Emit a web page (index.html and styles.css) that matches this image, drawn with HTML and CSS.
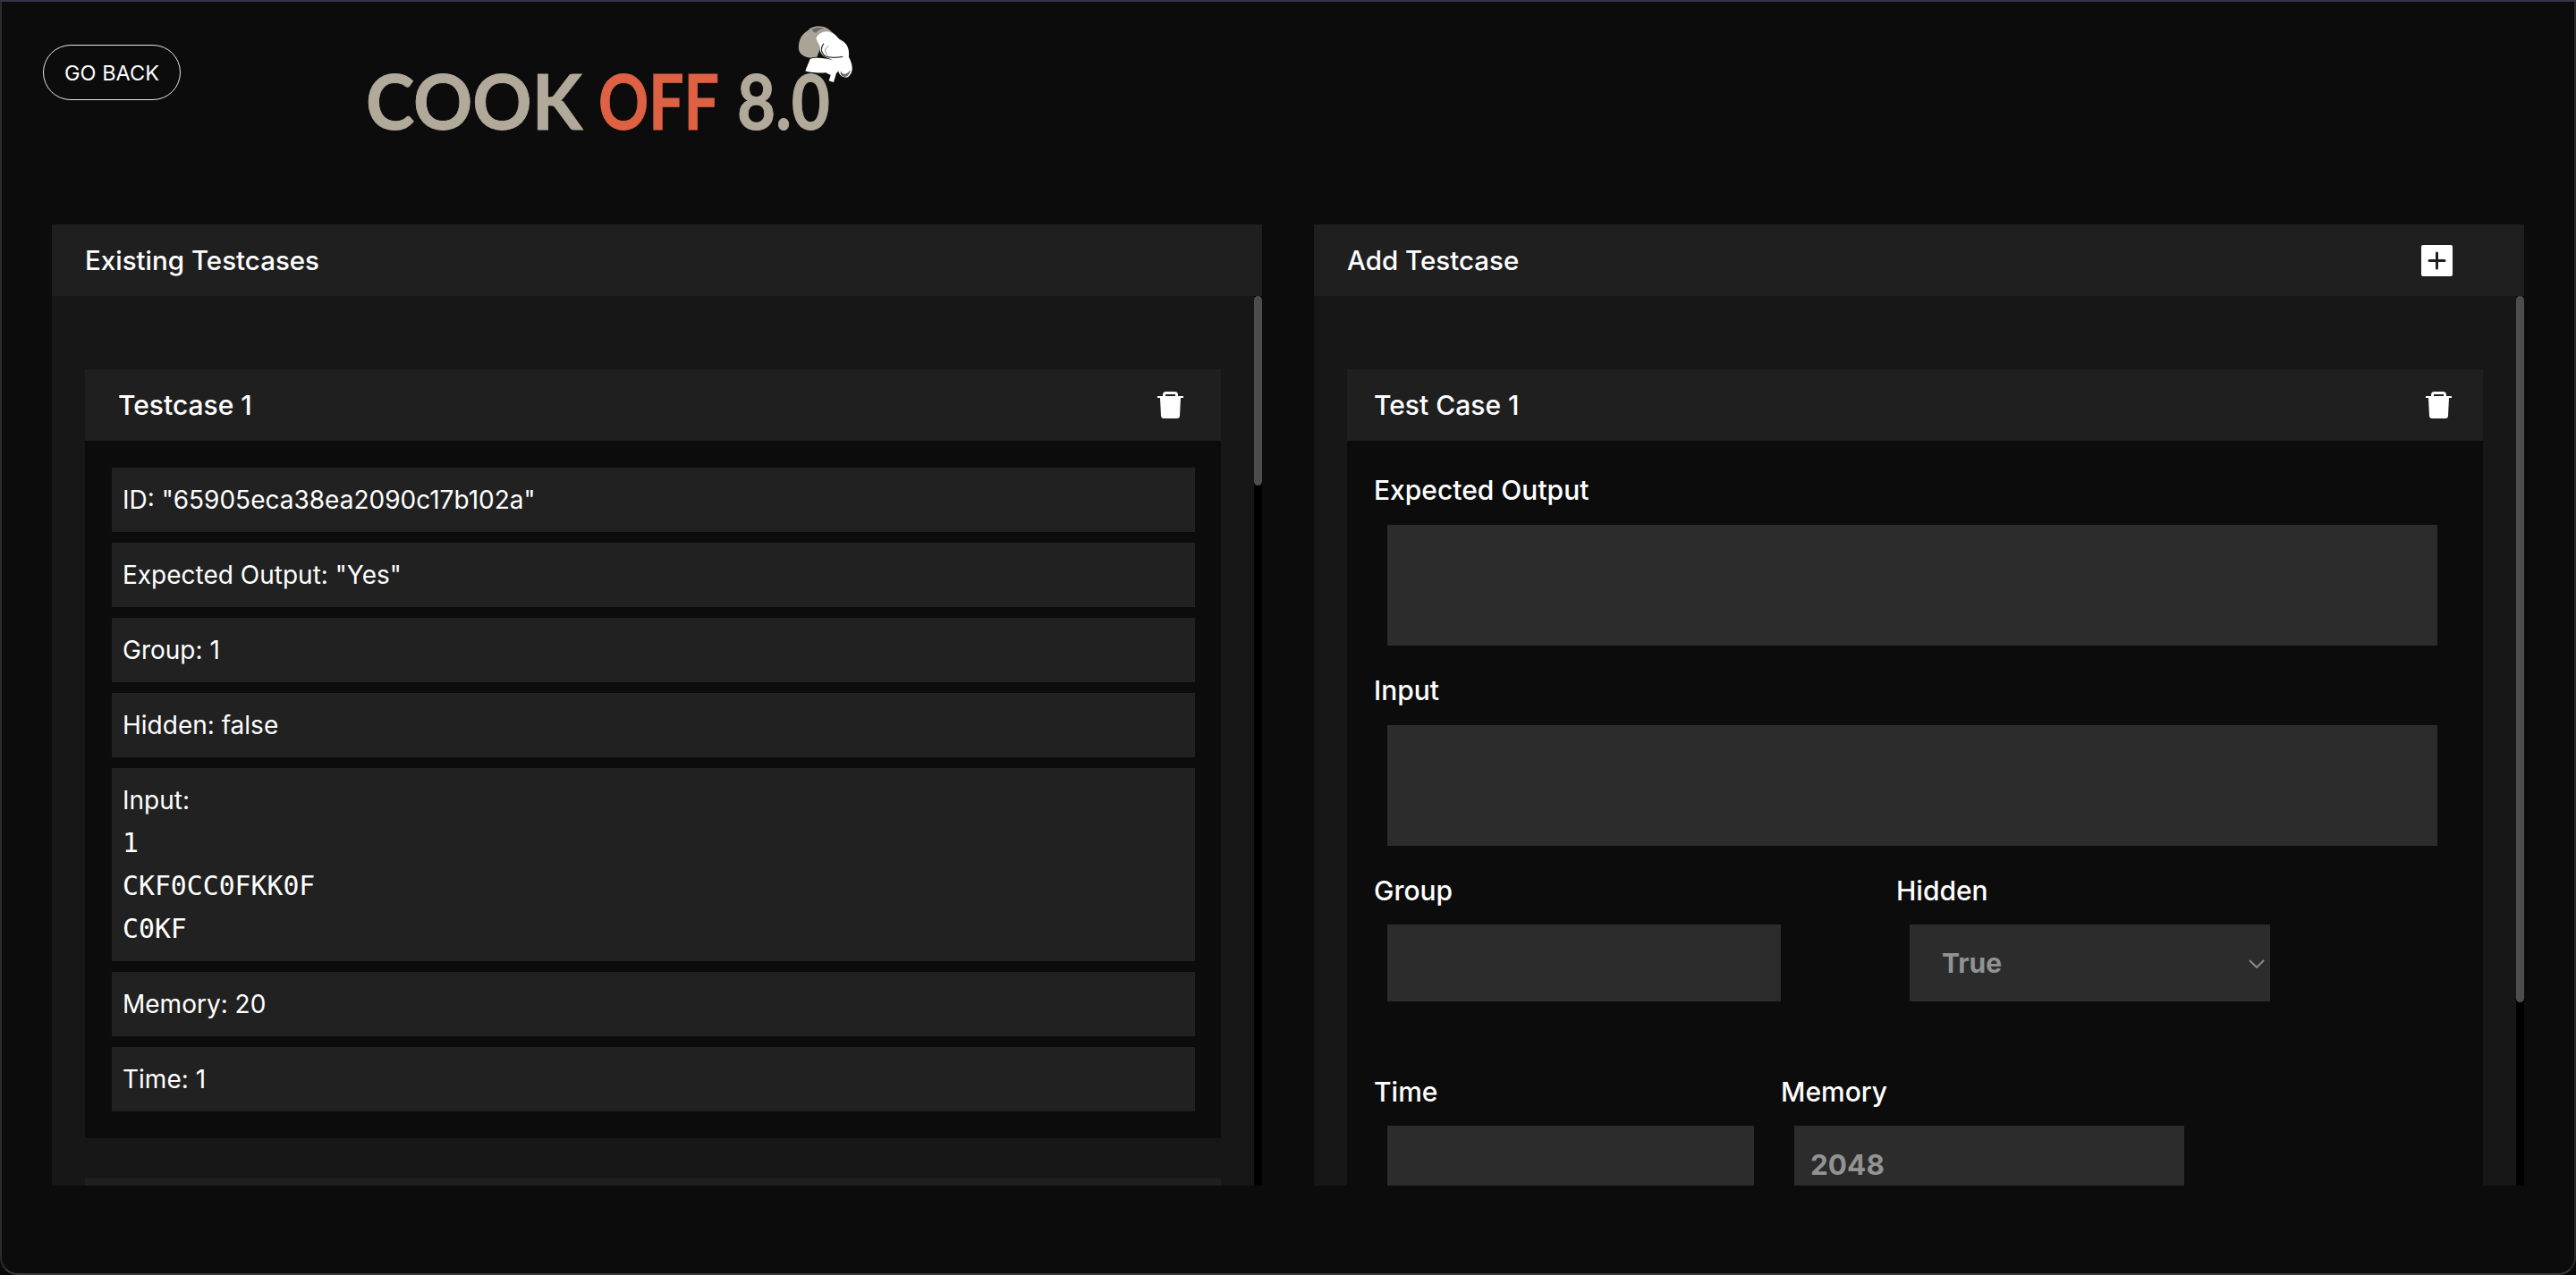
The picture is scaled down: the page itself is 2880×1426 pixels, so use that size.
FILE: index.html
```html
<!DOCTYPE html>
<html lang="en">
<head>
<meta charset="utf-8">
<title>Cook Off 8.0</title>
<link rel="stylesheet" href="styles.css">
</head>
<body>
<div class="window">
  <header class="topbar">
    <button class="back-btn">GO BACK</button>
    <svg class="logo" viewBox="0 0 560 90" width="560" height="90" role="img" aria-label="Cook Off 8.0">
      <text class="logo-text" x="0" y="93" textLength="242" lengthAdjust="spacingAndGlyphs">COOK</text>
      <text class="logo-text logo-off" x="260" y="93" textLength="135" lengthAdjust="spacingAndGlyphs">OFF</text>
      <text class="logo-text" x="415" y="93" textLength="104" lengthAdjust="spacingAndGlyphs">8.0</text>
      <g transform="translate(476 -30) scale(.33333)">
        <path d="M55 36C70 18 105 18 125 32L150 55 110 60 95 100 85 125 62 128C45 125 28 120 24 100 22 75 30 50 55 36Z" fill="#a9a398"/>
        <path d="M68 34C78 26 95 24 110 30 98 30 88 36 82 44 76 44 70 40 68 34Z" fill="#6c6c6c"/>
        <path d="M82 62C92 44 112 34 135 44 150 50 152 60 165 68 185 78 195 95 192 125 205 150 210 175 190 192 175 197 160 190 157 172 150 150 140 132 120 128 100 122 92 105 96 92 92 82 86 74 82 62Z" fill="#fff"/>
        <path d="M108 80C98 92 96 108 112 122 128 130 150 128 172 124" fill="none" stroke="#3a3a38" stroke-width="4"/>
        <path d="M124 88C112 96 108 108 122 118" fill="none" stroke="#8d887e" stroke-width="3"/>
        <path d="M62 132C85 125 115 130 135 135 150 140 158 155 158 172L150 180 141 210 125 205 131 186 115 178C90 180 60 178 46 172 50 160 58 145 62 132Z" fill="#fff"/>
        <path d="M165 172C170 186 186 186 197 168 196 182 188 192 178 192 168 192 162 184 165 172Z" fill="#6c6c6c"/>
      </g>
    </svg>
  </header>
  <main class="panels">
    <section class="panel">
      <div class="panel-head"><h2>Existing Testcases</h2></div>
      <div class="panel-body">
        <article class="card">
          <div class="card-head card-head-wide">
            <h3>Testcase 1</h3>
            <svg class="trash" viewBox="0 0 29 30" width="29" height="30"><path d="M6 6V3.500C6 1 7.500 0 9.500 0h10C21.500 0 23 1 23 3.500V6zM9 5h11V3H9z" fill="#fff" fill-rule="evenodd"/><path d="M0 5h29v2H0z" fill="#fff"/><path d="M3 7h23l-1 20c-.1 1.800-1.200 3-3 3H7c-1.800 0-2.900-1.200-3-3z" fill="#fff"/></svg>
          </div>
          <div class="card-body rows">
            <div class="row">ID: "65905eca38ea2090c17b102a"</div>
            <div class="row">Expected Output: "Yes"</div>
            <div class="row">Group: 1</div>
            <div class="row">Hidden: false</div>
            <div class="row">Input:<pre class="mono">1
CKF0CC0FKK0F
C0KF</pre></div>
            <div class="row">Memory: 20</div>
            <div class="row">Time: 1</div>
          </div>
        </article>
        <article class="card card-next">
          <div class="card-head card-head-wide"></div>
        </article>
      </div>
      <div class="scroll-thumb scroll-thumb-left"></div>
    </section>
    <section class="panel">
      <div class="panel-head panel-head-add">
        <h2>Add Testcase</h2>
        <span class="add-box"><svg viewBox="0 0 35 35" width="35" height="35"><path d="M9 17.500h17M17.500 9v17" stroke="#1f1f1f" stroke-width="3" stroke-linecap="round" fill="none"/></svg></span>
      </div>
      <div class="panel-body">
        <article class="card">
          <div class="card-head">
            <h3>Test Case 1</h3>
            <svg class="trash" viewBox="0 0 29 30" width="29" height="30"><path d="M6 6V3.500C6 1 7.500 0 9.500 0h10C21.500 0 23 1 23 3.500V6zM9 5h11V3H9z" fill="#fff" fill-rule="evenodd"/><path d="M0 5h29v2H0z" fill="#fff"/><path d="M3 7h23l-1 20c-.1 1.800-1.200 3-3 3H7c-1.800 0-2.900-1.200-3-3z" fill="#fff"/></svg>
          </div>
          <div class="card-body form">
            <label class="field">
              <span class="field-label">Expected Output</span>
              <textarea class="control area"></textarea>
            </label>
            <label class="field">
              <span class="field-label">Input</span>
              <textarea class="control area"></textarea>
            </label>
            <div class="field-row field-row-group">
              <label class="field field-group">
                <span class="field-label">Group</span>
                <input class="control box" type="text">
              </label>
              <label class="field field-hidden">
                <span class="field-label">Hidden</span>
                <span class="select control box">
                  <span>True</span>
                  <svg class="chevron" viewBox="0 0 18 10" width="18" height="10"><path d="M1 1l8 8 8-8" stroke="#8a8a8a" stroke-width="2" fill="none"/></svg>
                </span>
              </label>
            </div>
            <div class="field-row field-row-time">
              <label class="field field-time">
                <span class="field-label">Time</span>
                <input class="control box" type="text">
              </label>
              <label class="field field-memory">
                <span class="field-label">Memory</span>
                <input class="control box" type="text" value="2048">
              </label>
            </div>
          </div>
        </article>
      </div>
      <div class="scroll-thumb scroll-thumb-right"></div>
    </section>
  </main>
</div>
</body>
</html>
```

FILE: styles.css
```css
* { box-sizing: border-box; margin: 0; }
html, body { height: 100%; }
body { background: #0a0a0a; font-family: Inter, "Liberation Sans", sans-serif; color: #fff; overflow: hidden; }

.window {
  height: 1426px;
  background: #0c0c0c;
  border: 2px solid #34343c;
  border-top-color: #33344a;
  border-left-color: #2c2c30;
  border-right-color: #2c2c30;
  border-bottom-color: #3a3a3a;
  border-radius: 0 0 20px 20px;
  overflow: hidden;
}

.topbar { height: 249px; padding: 48px 0 0 46px; display: flex; align-items: flex-start; }
.back-btn {
  width: 154px; height: 62px;
  border: 1px solid #e6e6e6; border-radius: 31px;
  background: transparent; color: #fff;
  font: 400 23.500px Inter, sans-serif;
}
.logo { margin: 2px 0 0 207px; overflow: visible; display: block; }
.logo-text { font: 700 86px Lato, sans-serif; fill: #b1a999; stroke: #b1a999; stroke-width: 1px; }
.logo-off { fill: #dd6142; stroke: #dd6142; }

.panels { display: flex; gap: 58px; padding-left: 56px; height: 1075px; }
.panel { position: relative; width: 1353px; height: 1075px; overflow: hidden; background: #000; }
.panel-head { height: 80px; background: #1f1f1f; padding: 0 37px; display: flex; align-items: center; justify-content: space-between; }
h2 { font-size: 29.500px; font-weight: 500; }
h3 { font-size: 30px; font-weight: 500; }
.panel-head-add { padding-right: 80px; }
.add-box { width: 35px; height: 35px; background: #fff; border-radius: 2px; display: block; }
.add-box svg { display: block; }

.panel-body { width: 1344px; height: 995px; overflow: hidden; background: #171717; padding: 82px 37px 0; }
.card { background: #0c0c0c; }
.card-next { margin-top: 45px; }
.card-head { height: 80px; background: #1f1f1f; padding: 0 35px 0 30px; display: flex; align-items: center; justify-content: space-between; }
.card-head-wide { padding: 0 42px 0 37px; }
.trash { display: block; flex: none; }

.rows { padding: 30px 29px 30px 30px; display: flex; flex-direction: column; gap: 12px; }
.row { background: #212121; padding: 12px; font-size: 28px; line-height: 48px; font-weight: 400; }
.mono { font: 400 29.800px/48px "DejaVu Sans Mono", monospace; margin: 0; }

.form { padding: 31px 30px 0; }
.field { display: block; }
.field-label { display: block; font-size: 30px; line-height: 48px; font-weight: 500; }
.control { display: block; margin-left: 15px; background: #2c2c2c; border: 0; outline: 0; color: #929292; font: 700 30px Inter, sans-serif; }
.area { width: 1174px; height: 135px; margin-top: 15px; margin-bottom: 26px; resize: none; }
.box { height: 86px; margin-top: 14px; }
.field-row { display: flex; }
.field-group { width: 584px; }
.field-group .box { width: 440px; }
.select { width: 403px; position: relative; display: flex; align-items: center; padding-left: 36px; }
.chevron { position: absolute; right: 6px; top: 39px; }
.field-row-time { margin-top: 77px; }
.field-time { width: 455px; }
.field-time .box { width: 410px; }
.field-memory .box { width: 436px; padding: 0 18px; font-size: 31.500px; }

.scroll-thumb { position: absolute; right: 0; top: 80px; width: 9px; background: #4d4d4d; border-radius: 5px; }
.scroll-thumb-left { height: 212px; }
.scroll-thumb-right { height: 790px; }
```
